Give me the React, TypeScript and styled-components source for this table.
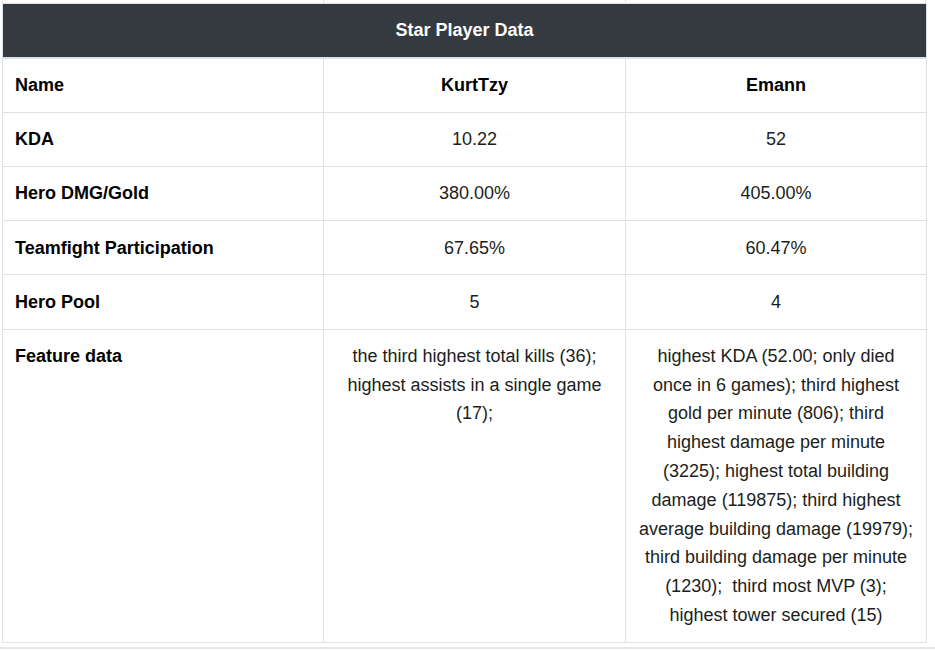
import React from "react";
import styled, { createGlobalStyle } from "styled-components";

const GlobalStyle = createGlobalStyle`
  html, body { margin: 0; padding: 0; background: #ffffff; }
  body {
    font-family: "Liberation Sans", Arial, sans-serif;
    font-size: 18px;
    color: #1b1e21;
  }
`;

const Page = styled.div`
  width: 935px;
  height: 651px;
  overflow: hidden;
  background: #fff;
`;

const Frame = styled.div`
  padding-left: 2px;
  width: 924px;
`;

const PrevTableEdge = styled.div`
  display: grid;
  grid-template-columns: 321px 302px 301px;
  height: 3px;
  border-left: 1px solid #dee2e6;
  border-right: 1px solid #dee2e6;
  box-sizing: border-box;
`;

const EdgeCell = styled.div<{ $last?: boolean }>`
  border-right: ${(p) => (p.$last ? "none" : "1px solid #dee2e6")};
`;

const Table = styled.table`
  width: 924px;
  border-collapse: collapse;
  table-layout: fixed;
  border: 1px solid #dee2e6;
`;

const TitleCell = styled.th`
  background: #343a40;
  color: #ffffff;
  font-weight: 700;
  font-size: 18px;
  line-height: 28.8px;
  padding: 12px;
  text-align: center;
  border: 1px solid #dee2e6;
  border-bottom-width: 2px;
`;

const LabelCell = styled.td`
  font-weight: 700;
  color: #000;
  line-height: 28.8px;
  padding: 12.2px 12px;
  text-align: left;
  vertical-align: top;
  border: 1px solid #dee2e6;
`;

const ValueCell = styled.td<{ $bold?: boolean }>`
  font-weight: ${(p) => (p.$bold ? 700 : 400)};
  color: ${(p) => (p.$bold ? "#000" : "#1b1e21")};
  line-height: 28.8px;
  padding: 12.2px 12px;
  text-align: center;
  vertical-align: top;
  border: 1px solid #dee2e6;
`;

const BottomRule = styled.div`
  margin-top: 4px;
  height: 2px;
  width: 935px;
  background: #e4e6e9;
`;

type Row = { label: string; a: string; b: string; bold?: boolean };

const rows: Row[] = [
  { label: "Name", a: "KurtTzy", b: "Emann", bold: true },
  { label: "KDA", a: "10.22", b: "52" },
  { label: "Hero DMG/Gold", a: "380.00%", b: "405.00%" },
  { label: "Teamfight Participation", a: "67.65%", b: "60.47%" },
  { label: "Hero Pool", a: "5", b: "4" },
  {
    label: "Feature data",
    a: "the third highest total kills (36); highest assists in a single game (17);",
    b: "highest KDA (52.00; only died once in 6 games); third highest gold per minute (806); third highest damage per minute (3225); highest total building damage (119875); third highest average building damage (19979); third building damage per minute (1230);\u00a0 third most MVP (3); highest tower secured (15)",
  },
];

export default function App() {
  return (
    <Page>
      <GlobalStyle />
      <Frame>
        <PrevTableEdge>
          <EdgeCell />
          <EdgeCell />
          <EdgeCell $last />
        </PrevTableEdge>
        <Table>
          <colgroup>
            <col style={{ width: 321 }} />
            <col style={{ width: 302 }} />
            <col style={{ width: 301 }} />
          </colgroup>
          <thead>
            <tr>
              <TitleCell colSpan={3}>Star Player Data</TitleCell>
            </tr>
          </thead>
          <tbody>
            {rows.map((r) => (
              <tr key={r.label}>
                <LabelCell>{r.label}</LabelCell>
                <ValueCell $bold={r.bold}>{r.a}</ValueCell>
                <ValueCell $bold={r.bold}>{r.b}</ValueCell>
              </tr>
            ))}
          </tbody>
        </Table>
      </Frame>
      <BottomRule />
    </Page>
  );
}
